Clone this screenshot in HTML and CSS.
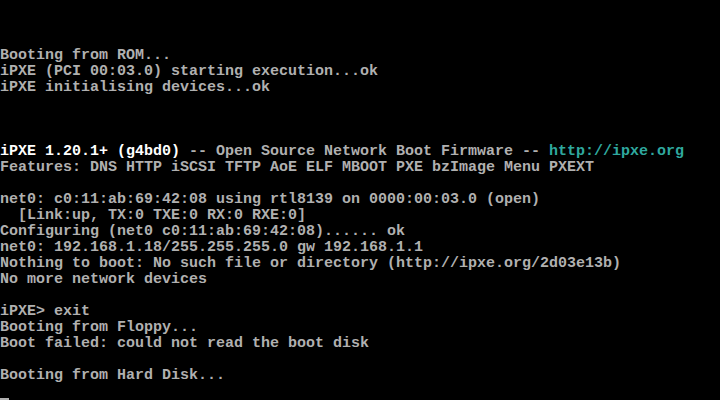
FILE: index.html
```html
<!DOCTYPE html>
<html>
<head>
<meta charset="utf-8">
<link rel="stylesheet" href="styles.css">
</head>
<body>
<pre class="console">



Booting from ROM...
iPXE (PCI 00:03.0) starting execution...ok
iPXE initialising devices...ok



<span class="white">iPXE 1.20.1+ (g4bd0)</span> -- Open Source Network Boot Firmware -- <span class="cyan">http://ipxe.org</span>
Features: DNS HTTP iSCSI TFTP AoE ELF MBOOT PXE bzImage Menu PXEXT

net0: c0:11:ab:69:42:08 using rtl8139 on 0000:00:03.0 (open)
  [Link:up, TX:0 TXE:0 RX:0 RXE:0]
Configuring (net0 c0:11:ab:69:42:08)...... ok
net0: 192.168.1.18/255.255.255.0 gw 192.168.1.1
Nothing to boot: No such file or directory (http://ipxe.org/2d03e13b)
No more network devices

iPXE&gt; exit
Booting from Floppy...
Boot failed: could not read the boot disk

Booting from Hard Disk...
<span class="cursor"></span></pre>
</body>
</html>
```
FILE: styles.css
```css
html, body {
  margin: 0;
  padding: 0;
  background: #000;
  width: 720px;
  height: 400px;
  overflow: hidden;
}
.console {
  margin: 0;
  padding: 0;
  font-family: "Liberation Mono", "DejaVu Sans Mono", monospace;
  font-weight: bold;
  font-size: 15px;
  line-height: 16px;
  color: #b0b0b0;
  white-space: pre;
}
.white {
  color: #ffffff;
}
.cyan {
  color: #2fa89f;
}
.cursor {
  display: inline-block;
  width: 9px;
  height: 16px;
  vertical-align: top;
  box-shadow: inset 0 -2px 0 #b0b0b0;
}
```
